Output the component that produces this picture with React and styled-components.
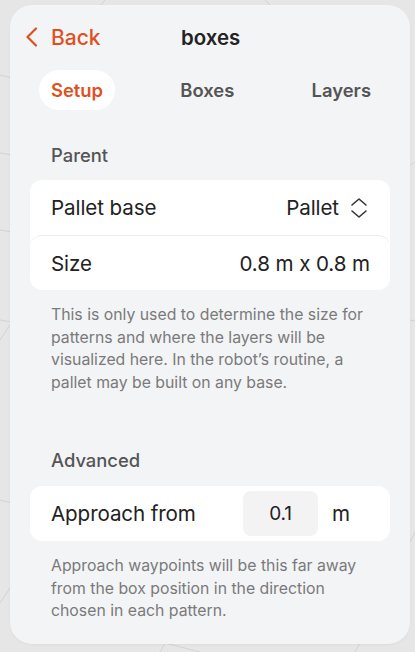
import styled, { createGlobalStyle } from "styled-components";

const GlobalStyle = createGlobalStyle`
    html, body {
        margin: 0;
        padding: 0;
        background: #e6e6e6;
        font-family: Inter, "Noto Sans", sans-serif;
        -webkit-font-smoothing: antialiased;
    }
`;

const orange = "#e0501e";

const Scene = styled.div`
    position: relative;
    min-height: 652px;
    padding: 5px 5px 8px 10px;
    box-sizing: border-box;
`;

const Backdrop = styled.svg`
    position: absolute;
    inset: 0;
    width: 100%;
    height: 100%;
    z-index: 0;
`;

const Panel = styled.section`
    position: relative;
    z-index: 1;
    background: #f3f4f6;
    border-radius: 22px;
    padding: 0 20px 21px;
    box-shadow: 0 1px 3px rgba(0, 0, 0, 0.04);
`;

const Header = styled.header`
    height: 64px;
    display: flex;
    align-items: center;
    position: relative;
`;

const BackButton = styled.button`
    display: flex;
    align-items: center;
    gap: 13px;
    border: none;
    background: none;
    padding: 0;
    margin-left: -5px;
    color: ${orange};
    font-family: inherit;
    font-size: 21px;
    font-weight: 500;
    cursor: pointer;
`;

const Title = styled.h1`
    position: absolute;
    left: 151px;
    margin: 0;
    font-size: 20.4px;
    font-weight: 600;
    color: #222;
`;

const Tabs = styled.nav`
    margin-top: 1px;
    display: flex;
    justify-content: space-between;
    padding: 0 7px 0 9px;
`;

const Tab = styled.button`
    height: 40px;
    padding: 0 12px;
    border: none;
    border-radius: 20px;
    background: ${(p) => (p.$active ? "#ffffff" : "transparent")};
    color: ${(p) => (p.$active ? orange : "#555")};
    font-family: inherit;
    font-size: 18.4px;
    font-weight: 600;
`;

const SectionTitle = styled.h2`
    margin: ${(p) => p.$top}px 0 0 21px;
    height: 35px;
    display: flex;
    align-items: center;
    font-size: 18.4px;
    font-weight: 500;
    color: #555;
`;

const Card = styled.div`
    margin-top: 8px;
    background: #fff;
    border-radius: 12px;
    overflow: hidden;
`;

const Row = styled.div`
    height: 55px;
    box-sizing: border-box;
    display: flex;
    align-items: center;
    justify-content: space-between;
    padding: 0 20px 0 21px;
    font-size: 20.6px;
    letter-spacing: -0.1px;
    color: #222;
    & + & {
        border-top: 1px solid #ebebeb;
        border-radius: 12px 12px 0 0;
    }
`;

const Value = styled.span`
    display: flex;
    align-items: center;
    gap: 11px;
    margin-right: 2px;
`;

const InputRow = styled(Row)`
    padding: 5px 40px 5px 21px;
    justify-content: flex-start;
`;

const NumberBox = styled.div`
    margin-left: auto;
    width: 75px;
    height: 45px;
    border-radius: 8px;
    background: #f3f3f3;
    display: flex;
    align-items: center;
    justify-content: center;
    font-size: 19px;
`;

const Unit = styled.span`
    margin-left: 14px;
`;

const Help = styled.p`
    margin: 14px 0 0 21px;
    padding-right: 15px;
    font-size: 15.8px;
    line-height: 22.7px;
    color: #7a7a7a;
`;

function Chevron() {
    return (
        <svg width="13" height="20" viewBox="0 0 13 20" fill="none">
            <path d="M11 1.5 L2.5 10 L11 18.5" stroke={orange} strokeWidth="2.2" strokeLinecap="round" strokeLinejoin="round" />
        </svg>
    );
}

function UpDown() {
    return (
        <svg width="18" height="22" viewBox="0 0 18 22" fill="none">
            <path d="M2 8 L9 2 L16 8 M2 14 L9 20 L16 14" stroke="#333" strokeWidth="1.6" strokeLinecap="round" strokeLinejoin="round" />
        </svg>
    );
}

export default function App() {
    return (
        <>
            <GlobalStyle />
            <Scene>
                <Backdrop viewBox="0 0 415 652" preserveAspectRatio="none">
                    <g stroke="#d2d2d2" strokeWidth="1" fill="none">
                        <line x1="105" y1="0" x2="100" y2="6" />
                        <line x1="265" y1="0" x2="270" y2="5" />
                        <line x1="0" y1="75" x2="12" y2="78" />
                        <line x1="0" y1="153" x2="12" y2="155" />
                        <line x1="0" y1="230" x2="12" y2="232" />
                        <line x1="0" y1="320" x2="12" y2="322" />
                        <line x1="0" y1="340" x2="10" y2="325" />
                        <line x1="0" y1="500" x2="12" y2="503" />
                        <line x1="0" y1="603" x2="10" y2="588" />
                        <line x1="410" y1="165" x2="415" y2="162" />
                        <line x1="410" y1="320" x2="415" y2="321" />
                        <line x1="410" y1="542" x2="415" y2="532" />
                        <line x1="160" y1="652" x2="165" y2="643" />
                        <line x1="165" y1="643" x2="200" y2="652" />
                        <line x1="355" y1="652" x2="360" y2="643" />
                    </g>
                </Backdrop>
                <Panel>
                    <Header>
                        <BackButton>
                            <Chevron />
                            Back
                        </BackButton>
                        <Title>boxes</Title>
                    </Header>
                    <Tabs>
                        <Tab $active>Setup</Tab>
                        <Tab>Boxes</Tab>
                        <Tab>Layers</Tab>
                    </Tabs>

                    <SectionTitle $top={27}>Parent</SectionTitle>
                    <Card>
                        <Row>
                            <span>Pallet base</span>
                            <Value>
                                Pallet
                                <UpDown />
                            </Value>
                        </Row>
                        <Row>
                            <span>Size</span>
                            <span>0.8 m x 0.8 m</span>
                        </Row>
                    </Card>
                    <Help>
                        This is only used to determine the size for patterns and where the layers will be
                        visualized here. In the robot’s routine, a pallet may be built on any base.
                    </Help>

                    <SectionTitle $top={48}>Advanced</SectionTitle>
                    <Card>
                        <InputRow>
                            <span>Approach from</span>
                            <NumberBox>0.1</NumberBox>
                            <Unit>m</Unit>
                        </InputRow>
                    </Card>
                    <Help>
                        Approach waypoints will be this far away from the box position in the direction
                        chosen in each pattern.
                    </Help>
                </Panel>
            </Scene>
        </>
    );
}
